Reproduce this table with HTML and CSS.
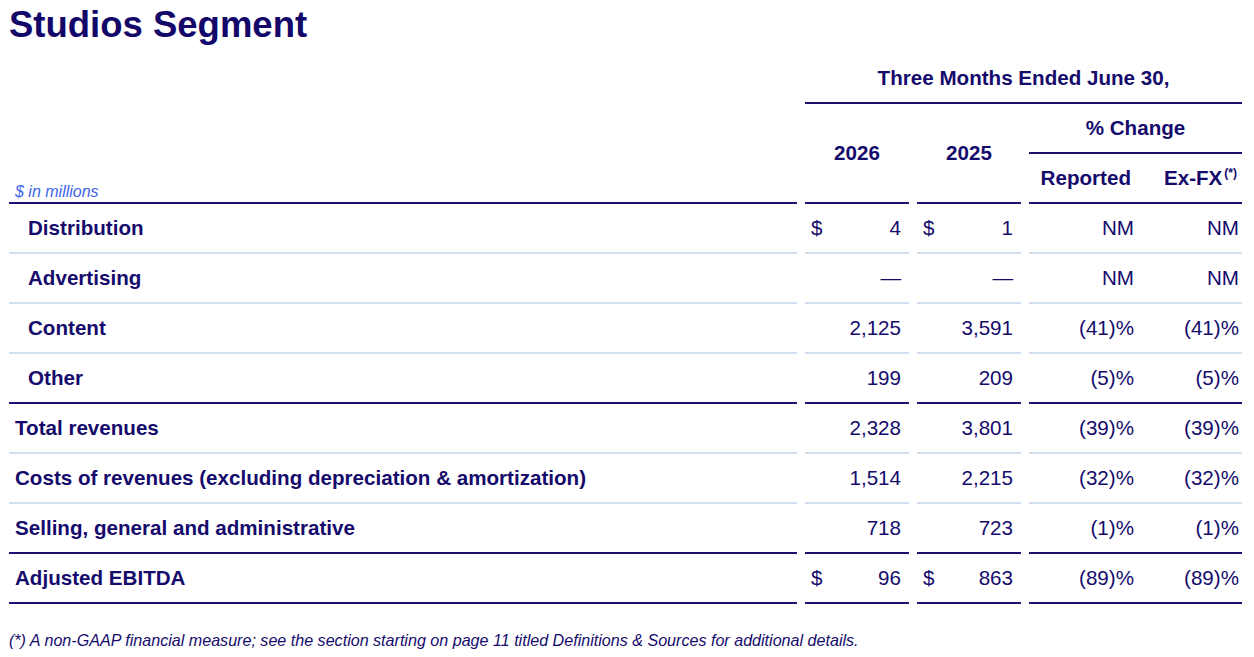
FILE: index.html
```html
<!DOCTYPE html>
<html lang="en">
<head>
<meta charset="utf-8">
<title>Studios Segment</title>
<link rel="stylesheet" href="styles.css">
</head>
<body>
<div class="page">
  <h1 class="title">Studios Segment</h1>
  <div class="table">
    <div class="head">
      <div class="h-label"><span class="units">$ in millions</span></div>
      <div class="h-period">Three Months Ended June 30,</div>
      <div class="h-year y1">2026</div>
      <div class="h-year y2">2025</div>
      <div class="h-change">% Change</div>
      <div class="h-sub"><span class="s-rep">Reported</span><span class="s-fx">Ex-FX<sup>(*)</sup></span></div>
    </div>

    <div class="row">
      <div class="label indent">Distribution</div>
      <div class="num"><span>$</span><span>4</span></div>
      <div class="num"><span>$</span><span>1</span></div>
      <div class="chg"><span>NM</span><span>NM</span></div>
    </div>
    <div class="row">
      <div class="label indent">Advertising</div>
      <div class="num"><span></span><span>—</span></div>
      <div class="num"><span></span><span>—</span></div>
      <div class="chg"><span>NM</span><span>NM</span></div>
    </div>
    <div class="row">
      <div class="label indent">Content</div>
      <div class="num"><span></span><span>2,125</span></div>
      <div class="num"><span></span><span>3,591</span></div>
      <div class="chg"><span>(41)%</span><span>(41)%</span></div>
    </div>
    <div class="row thick">
      <div class="label indent">Other</div>
      <div class="num"><span></span><span>199</span></div>
      <div class="num"><span></span><span>209</span></div>
      <div class="chg"><span>(5)%</span><span>(5)%</span></div>
    </div>
    <div class="row">
      <div class="label">Total revenues</div>
      <div class="num"><span></span><span>2,328</span></div>
      <div class="num"><span></span><span>3,801</span></div>
      <div class="chg"><span>(39)%</span><span>(39)%</span></div>
    </div>
    <div class="row">
      <div class="label">Costs of revenues (excluding depreciation &amp; amortization)</div>
      <div class="num"><span></span><span>1,514</span></div>
      <div class="num"><span></span><span>2,215</span></div>
      <div class="chg"><span>(32)%</span><span>(32)%</span></div>
    </div>
    <div class="row thick">
      <div class="label">Selling, general and administrative</div>
      <div class="num"><span></span><span>718</span></div>
      <div class="num"><span></span><span>723</span></div>
      <div class="chg"><span>(1)%</span><span>(1)%</span></div>
    </div>
    <div class="row thick">
      <div class="label">Adjusted EBITDA</div>
      <div class="num"><span>$</span><span>96</span></div>
      <div class="num"><span>$</span><span>863</span></div>
      <div class="chg"><span>(89)%</span><span>(89)%</span></div>
    </div>
  </div>
  <p class="note">(*) A non-GAAP financial measure; see the section starting on page 11 titled Definitions &amp; Sources for additional details.</p>
</div>
</body>
</html>
```

FILE: styles.css
```css
* { box-sizing: border-box; }
html, body { margin: 0; padding: 0; background: #ffffff; }
body {
  font-family: "Liberation Sans", Arial, sans-serif;
  color: #150b6c;
}
.page {
  padding: 3px 12px 0 9px;
}
.title {
  margin: 0;
  font-size: 36.5px;
  line-height: 44px;
  font-weight: bold;
  color: #13076a;
}
.table {
  margin-top: 7px;
  width: 1233px;
}
.head, .row {
  display: grid;
  grid-template-columns: 788px 104px 104px 213px;
  column-gap: 8px;
}
.head {
  grid-template-rows: 50px 50px 50px;
  font-weight: bold;
  font-size: 20.6px;
}
.head > div {
  border-bottom: 2px solid #1a1072;
  display: flex;
  align-items: center;
  justify-content: center;
}
.h-label {
  grid-column: 1;
  grid-row: 1 / 4;
  align-items: flex-end !important;
  justify-content: flex-start !important;
  padding: 0 0 1px 6px;
}
.units {
  font-weight: normal;
  font-style: italic;
  font-size: 16px;
  color: #3e63e6;
}
.h-period {
  grid-column: 2 / 5;
  grid-row: 1;
  padding-bottom: 1px;
}
.y1 { grid-column: 2; grid-row: 2 / 4; }
.y2 { grid-column: 3; grid-row: 2 / 4; }
.h-change { grid-column: 4; grid-row: 2; }
.h-sub {
  grid-column: 4;
  grid-row: 3;
  justify-content: stretch !important;
}
.h-sub > span {
  text-align: right;
}
.s-rep { width: 108px; padding-right: 6px; }
.s-fx { width: 105px; padding-right: 5px; }
.s-fx sup {
  font-size: 12px;
  vertical-align: 0;
  position: relative;
  top: -8px;
  margin-left: 2px;
}
.row {
  height: 50px;
  font-size: 20.6px;
}
.row > div {
  border-bottom: 2px solid #d3e0f2;
  display: flex;
  align-items: center;
}
.row.thick > div {
  border-bottom-color: #1a1072;
}
.label {
  font-weight: bold;
  padding-left: 6px;
}
.label.indent { padding-left: 19px; }
.num {
  justify-content: space-between;
  padding: 0 8px 0 6px;
}
.chg > span {
  text-align: right;
  padding-right: 3px;
}
.chg > span:first-child { width: 108px; }
.chg > span:last-child { width: 105px; }
.note {
  margin: 27px 0 0 0;
  font-style: italic;
  font-size: 16.1px;
  line-height: 19px;
  color: #150b6c;
}
```
